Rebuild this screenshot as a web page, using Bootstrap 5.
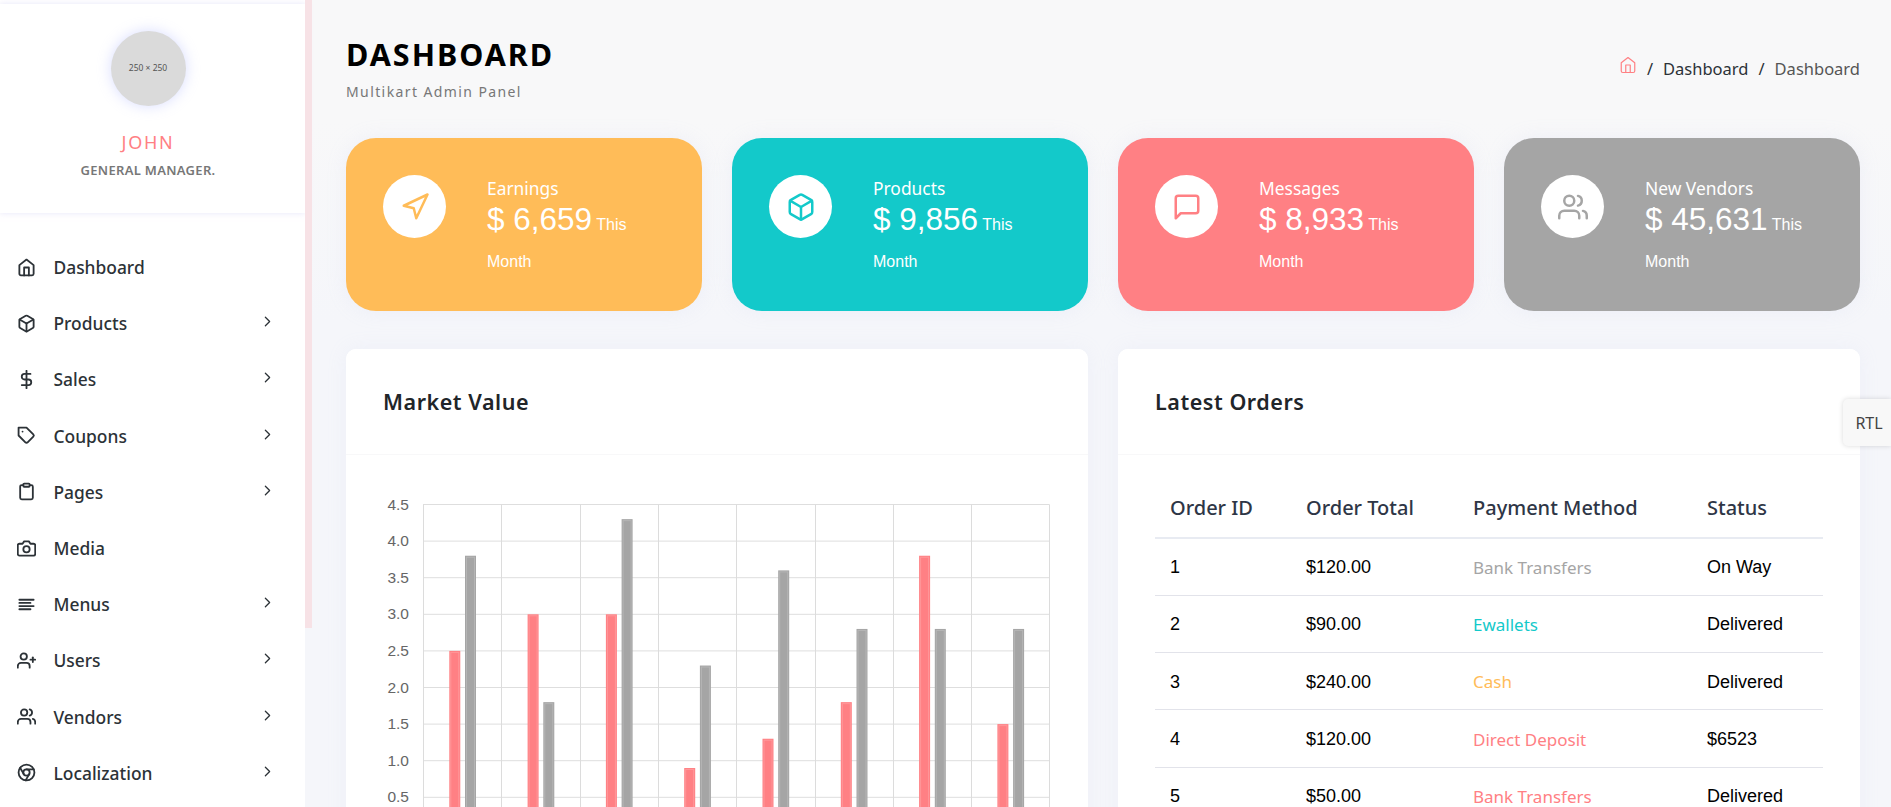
<!DOCTYPE html>
<html lang="en">
<head>
    <meta charset="UTF-8">
    <meta name="viewport" content="width=device-width, initial-scale=1">
    <title>Multikart Admin Panel</title>
    <link href="https://cdn.jsdelivr.net/npm/bootstrap@5.3.0/dist/css/bootstrap.min.css" rel="stylesheet">
    <style>
        body {
            font-family: "Noto Sans", "Open Sans", sans-serif;
            background: linear-gradient(to bottom, #f8f8f9 0, #f8f8f9 120px, #f5f6fa 320px);
            color: #2c3237;
        }

        .ico { fill: none; stroke: currentColor; stroke-width: 2; stroke-linecap: round; stroke-linejoin: round; }

        /* barra lateral */
        .side-panel { width: 305px; background: #fff; flex: none; }
        .side-top {
            height: 209px;
            margin-top: 4px;
            padding-right: 9px;
            background: #fff;
            box-shadow: 0 0 6px rgba(214, 212, 245, .6);
        }
        .side-track { width: 7px; flex: none; }
        .side-thumb { height: 628px; background: #f7e2e6; }
        .avatar-round {
            width: 75px;
            height: 75px;
            margin-top: 27px;
            background: #dadada;
            box-shadow: 0 0 14px rgba(170, 180, 255, .45);
            font-size: 8.5px;
            color: #555;
        }
        .user-name { margin-top: 24px; font-size: 18px; line-height: 24px; letter-spacing: 1.7px; color: #ff8084; }
        .user-role { margin-top: 7px; font-size: 13px; line-height: 18px; font-weight: 600; letter-spacing: .3px; color: #777; }
        .side-menu { padding-top: 26px; }
        .side-link {
            height: 56.2px;
            padding: 0 29px 0 17px;
            font-size: 17.4px;
            font-weight: 500;
            color: #2c3237;
        }
        .side-link:hover { color: #ff8084; }
        .side-link .ico-main { width: 19px; height: 19px; margin-right: 17.5px; flex: none; stroke-width: 2.3; }
        .side-link .ico-next { width: 17px; height: 17px; margin-left: auto; margin-top: -3px; flex: none; stroke-width: 1.8; }

        /* contenido */
        .main-area { padding: 0 31px 0 34px; min-width: 0; }
        .page-title { height: 138px; }
        .page-title h3 { margin: 36px 0 0; font-size: 30.5px; line-height: 36px; font-weight: 700; letter-spacing: 2px; color: #000; }
        .page-title p { margin: 10px 0 0; font-size: 14px; line-height: 20px; letter-spacing: 1.4px; color: #777; }
        .crumbs { margin: 58px 0 0; font-size: 16.5px; line-height: 22px; --bs-breadcrumb-item-padding-x: 10px; --bs-breadcrumb-divider-color: #2c3237; --bs-breadcrumb-item-active-color: #555; }
        .crumbs a { color: #2c3237; text-decoration: none; }
        .crumbs svg { width: 18px; height: 18px; margin-top: -11px; color: #ff8084; stroke-width: 1.6; }

        .row-wide { --bs-gutter-x: 30px; }
        .stat-box {
            height: 173px;
            padding: 37px;
            margin-bottom: 38px;
            border-radius: 30px;
            color: #fff;
            box-shadow: 0 0 20px rgba(190, 195, 235, .15);
        }
        .stat-orange { background: #ffbc58; }
        .stat-teal { background: #13c9ca; }
        .stat-red { background: #ff8084; }
        .stat-gray { background: #a5a5a5; }
        .stat-circle { width: 63px; height: 63px; margin-right: 41px; background: #fff; flex: none; }
        .stat-circle svg { width: 30px; height: 30px; }
        .stat-orange .stat-circle { color: #ffbc58; }
        .stat-teal .stat-circle { color: #13c9ca; }
        .stat-red .stat-circle { color: #ff8084; }
        .stat-gray .stat-circle { color: #a5a5a5; }
        .stat-label { margin-top: 1px; font-size: 17.4px; line-height: 25px; }
        .stat-value { font-family: "Liberation Sans", Arial, sans-serif; font-size: 31.5px; line-height: 37px; margin: 0; }
        .stat-value span { font-size: 16px; line-height: 1; }

        .panel-box { border: 0; border-radius: 10px; height: 520px; box-shadow: 0 0 20px rgba(190, 195, 235, .12); }
        .panel-box .card-header {
            flex: none;
            height: 106px;
            padding: 0 37px;
            display: flex;
            align-items: center;
            background: #fff;
            border-bottom: 1px solid #f8f8f9;
            border-radius: 10px 10px 0 0;
        }
        .panel-box h5 { margin: 0; font-size: 21.5px; font-weight: 600; letter-spacing: .55px; color: #212529; }
        .panel-box .card-body { padding: 37px; }

        .chart-svg { display: block; overflow: visible; }
        .chart-svg text { font-family: "Liberation Sans", Arial, sans-serif; font-size: 15.5px; fill: #666; }

        .orders-table { margin: -12px 0 0; font-family: "Liberation Sans", Arial, sans-serif; color: #000; --bs-table-color: #000; --bs-border-color: #e2e3ea; }
        .orders-table th {
            height: 58px;
            padding: 0 15px 2px;
            vertical-align: middle;
            font-family: "Noto Sans", sans-serif;
            font-size: 20px;
            font-weight: 500;
            color: #2e3646;
            border-bottom: 2px solid #e8ebf2;
        }
        .orders-table td { height: 57.3px; padding: 2px 15px 0; vertical-align: middle; font-size: 18px; }
        .pay-cell { font-family: "Noto Sans", sans-serif; font-size: 17px !important; }
        .pay-gray { color: #a5a5a5; }
        .pay-teal { color: #13c9ca; }
        .pay-orange { color: #ffbc58; }
        .pay-red { color: #ff8084; }

        .rtl-tab {
            position: absolute;
            top: 399px;
            right: 0;
            width: 48px;
            height: 47px;
            padding-left: 4px;
            background: #f8f8f8;
            border-radius: 5px 0 0 5px;
            box-shadow: 0 0 5px rgba(0, 0, 0, .15);
            font-size: 16px;
            color: #444;
        }
    </style>
</head>
<body class="vh-100 overflow-hidden d-flex position-relative">

<!-- iconos -->
<svg width="0" height="0" class="position-absolute">
    <symbol id="i-home" viewBox="0 0 24 24"><path d="M3 9l9-7 9 7v11a2 2 0 0 1-2 2H5a2 2 0 0 1-2-2z"/><polyline points="9 22 9 12 15 12 15 22"/></symbol>
    <symbol id="i-box" viewBox="0 0 24 24"><path d="M21 16V8a2 2 0 0 0-1-1.73l-7-4a2 2 0 0 0-2 0l-7 4A2 2 0 0 0 3 8v8a2 2 0 0 0 1 1.73l7 4a2 2 0 0 0 2 0l7-4A2 2 0 0 0 21 16z"/><polyline points="3.27 6.96 12 12.01 20.73 6.96"/><line x1="12" y1="22.08" x2="12" y2="12"/></symbol>
    <symbol id="i-dollar" viewBox="0 0 24 24"><line x1="12" y1="1" x2="12" y2="23"/><path d="M17 5H9.5a3.5 3.5 0 0 0 0 7h5a3.5 3.5 0 0 1 0 7H6"/></symbol>
    <symbol id="i-tag" viewBox="0 0 24 24"><path d="M20.59 13.41l-7.17 7.17a2 2 0 0 1-2.83 0L2 12V2h10l8.59 8.59a2 2 0 0 1 0 2.82z"/><line x1="7" y1="7" x2="7.01" y2="7"/></symbol>
    <symbol id="i-clip" viewBox="0 0 24 24"><path d="M16 4h2a2 2 0 0 1 2 2v14a2 2 0 0 1-2 2H6a2 2 0 0 1-2-2V6a2 2 0 0 1 2-2h2"/><rect x="8" y="2" width="8" height="4" rx="1"/></symbol>
    <symbol id="i-camera" viewBox="0 0 24 24"><path d="M23 19a2 2 0 0 1-2 2H3a2 2 0 0 1-2-2V8a2 2 0 0 1 2-2h4l2-3h6l2 3h4a2 2 0 0 1 2 2z"/><circle cx="12" cy="13" r="4"/></symbol>
    <symbol id="i-align" viewBox="0 0 24 24"><line x1="17" y1="10" x2="3" y2="10"/><line x1="21" y1="6" x2="3" y2="6"/><line x1="21" y1="14" x2="3" y2="14"/><line x1="17" y1="18" x2="3" y2="18"/></symbol>
    <symbol id="i-userplus" viewBox="0 0 24 24"><path d="M16 21v-2a4 4 0 0 0-4-4H5a4 4 0 0 0-4 4v2"/><circle cx="8.5" cy="7" r="4"/><line x1="20" y1="8" x2="20" y2="14"/><line x1="23" y1="11" x2="17" y2="11"/></symbol>
    <symbol id="i-users" viewBox="0 0 24 24"><path d="M17 21v-2a4 4 0 0 0-4-4H5a4 4 0 0 0-4 4v2"/><circle cx="9" cy="7" r="4"/><path d="M23 21v-2a4 4 0 0 0-3-3.87"/><path d="M16 3.13a4 4 0 0 1 0 7.75"/></symbol>
    <symbol id="i-chrome" viewBox="0 0 24 24"><circle cx="12" cy="12" r="10"/><circle cx="12" cy="12" r="4"/><line x1="21.17" y1="8" x2="12" y2="8"/><line x1="3.95" y1="6.06" x2="8.54" y2="14"/><line x1="10.88" y1="21.94" x2="15.46" y2="14"/></symbol>
    <symbol id="i-next" viewBox="0 0 24 24"><polyline points="9 18 15 12 9 6"/></symbol>
    <symbol id="i-nav" viewBox="0 0 24 24"><polygon points="3 11 22 2 13 21 11 13 3 11"/></symbol>
    <symbol id="i-msg" viewBox="0 0 24 24"><path d="M21 15a2 2 0 0 1-2 2H7l-4 4V5a2 2 0 0 1 2-2h14a2 2 0 0 1 2 2z"/></symbol>
</svg>

<aside class="side-panel">
    <div class="side-top text-center">
        <div class="avatar-round rounded-circle mx-auto d-inline-flex align-items-center justify-content-center">250 × 250</div>
        <div class="user-name">JOHN</div>
        <div class="user-role">GENERAL MANAGER.</div>
    </div>
    <nav class="side-menu nav flex-column">
        <a class="side-link nav-link d-flex align-items-center" href="#"><svg class="ico ico-main"><use href="#i-home"/></svg>Dashboard</a>
        <a class="side-link nav-link d-flex align-items-center" href="#"><svg class="ico ico-main"><use href="#i-box"/></svg>Products<svg class="ico ico-next"><use href="#i-next"/></svg></a>
        <a class="side-link nav-link d-flex align-items-center" href="#"><svg class="ico ico-main"><use href="#i-dollar"/></svg>Sales<svg class="ico ico-next"><use href="#i-next"/></svg></a>
        <a class="side-link nav-link d-flex align-items-center" href="#"><svg class="ico ico-main"><use href="#i-tag"/></svg>Coupons<svg class="ico ico-next"><use href="#i-next"/></svg></a>
        <a class="side-link nav-link d-flex align-items-center" href="#"><svg class="ico ico-main"><use href="#i-clip"/></svg>Pages<svg class="ico ico-next"><use href="#i-next"/></svg></a>
        <a class="side-link nav-link d-flex align-items-center" href="#"><svg class="ico ico-main"><use href="#i-camera"/></svg>Media</a>
        <a class="side-link nav-link d-flex align-items-center" href="#"><svg class="ico ico-main"><use href="#i-align"/></svg>Menus<svg class="ico ico-next"><use href="#i-next"/></svg></a>
        <a class="side-link nav-link d-flex align-items-center" href="#"><svg class="ico ico-main"><use href="#i-userplus"/></svg>Users<svg class="ico ico-next"><use href="#i-next"/></svg></a>
        <a class="side-link nav-link d-flex align-items-center" href="#"><svg class="ico ico-main"><use href="#i-users"/></svg>Vendors<svg class="ico ico-next"><use href="#i-next"/></svg></a>
        <a class="side-link nav-link d-flex align-items-center" href="#"><svg class="ico ico-main"><use href="#i-chrome"/></svg>Localization<svg class="ico ico-next"><use href="#i-next"/></svg></a>
    </nav>
</aside>
<div class="side-track"><div class="side-thumb"></div></div>

<main class="main-area flex-grow-1">
    <div class="page-title d-flex justify-content-between">
        <div>
            <h3>DASHBOARD</h3>
            <p>Multikart Admin Panel</p>
        </div>
        <ol class="crumbs breadcrumb">
            <li class="breadcrumb-item"><a href="#"><svg class="ico"><use href="#i-home"/></svg></a></li>
            <li class="breadcrumb-item"><a href="#">Dashboard</a></li>
            <li class="breadcrumb-item active">Dashboard</li>
        </ol>
    </div>

    <div class="row row-wide">
        <div class="col-3">
            <div class="stat-box stat-orange d-flex">
                <div class="stat-circle rounded-circle d-flex align-items-center justify-content-center"><svg class="ico"><use href="#i-nav"/></svg></div>
                <div>
                    <div class="stat-label">Earnings</div>
                    <h3 class="stat-value">$ 6,659<span> This Month</span></h3>
                </div>
            </div>
        </div>
        <div class="col-3">
            <div class="stat-box stat-teal d-flex">
                <div class="stat-circle rounded-circle d-flex align-items-center justify-content-center"><svg class="ico"><use href="#i-box"/></svg></div>
                <div>
                    <div class="stat-label">Products</div>
                    <h3 class="stat-value">$ 9,856<span> This Month</span></h3>
                </div>
            </div>
        </div>
        <div class="col-3">
            <div class="stat-box stat-red d-flex">
                <div class="stat-circle rounded-circle d-flex align-items-center justify-content-center"><svg class="ico"><use href="#i-msg"/></svg></div>
                <div>
                    <div class="stat-label">Messages</div>
                    <h3 class="stat-value">$ 8,933<span> This Month</span></h3>
                </div>
            </div>
        </div>
        <div class="col-3">
            <div class="stat-box stat-gray d-flex">
                <div class="stat-circle rounded-circle d-flex align-items-center justify-content-center"><svg class="ico"><use href="#i-users"/></svg></div>
                <div>
                    <div class="stat-label">New Vendors</div>
                    <h3 class="stat-value">$ 45,631<span> This Month</span></h3>
                </div>
            </div>
        </div>
    </div>

    <div class="row row-wide">
        <div class="col-6">
            <div class="card panel-box">
                <div class="card-header"><h5>Market Value</h5></div>
                <div class="card-body">
                    <svg id="marketChart" class="chart-svg" width="668" height="345"></svg>
                </div>
            </div>
        </div>
        <div class="col-6">
            <div class="card panel-box">
                <div class="card-header"><h5>Latest Orders</h5></div>
                <div class="card-body">
                    <table class="orders-table table">
                        <thead>
                            <tr><th style="width:136px">Order ID</th><th style="width:167px">Order Total</th><th style="width:234px">Payment Method</th><th>Status</th></tr>
                        </thead>
                        <tbody>
                            <tr><td>1</td><td>$120.00</td><td class="pay-cell pay-gray">Bank Transfers</td><td>On Way</td></tr>
                            <tr><td>2</td><td>$90.00</td><td class="pay-cell pay-teal">Ewallets</td><td>Delivered</td></tr>
                            <tr><td>3</td><td>$240.00</td><td class="pay-cell pay-orange">Cash</td><td>Delivered</td></tr>
                            <tr><td>4</td><td>$120.00</td><td class="pay-cell pay-red">Direct Deposit</td><td>$6523</td></tr>
                            <tr><td>5</td><td>$50.00</td><td class="pay-cell pay-red">Bank Transfers</td><td>Delivered</td></tr>
                        </tbody>
                    </table>
                </div>
            </div>
        </div>
    </div>
</main>

<div class="rtl-tab d-flex align-items-center justify-content-center">RTL</div>

<script src="https://cdn.jsdelivr.net/npm/bootstrap@5.3.0/dist/js/bootstrap.bundle.min.js"></script>
<script>
    // Grafica de barras Market Value
    var rojo = [2.5, 3, 3, 0.9, 1.3, 1.8, 3.8, 1.5];
    var gris = [3.8, 1.8, 4.3, 2.3, 3.6, 2.8, 2.8, 2.8];
    var x0 = 40, colW = 78.3, y0 = 12.5, unit = 73.2, base = y0 + 4.5 * unit;
    var html = "";

    for (var v = 0; v <= 9; v++) {
        var y = y0 + v * 0.5 * unit;
        html += '<line x1="' + x0 + '" x2="' + (x0 + 8 * colW) + '" y1="' + y + '" y2="' + y + '" stroke="#dedede" stroke-width="1"/>';
        if (v < 9) html += '<text x="26" y="' + (y + 5) + '" text-anchor="end">' + (4.5 - v * 0.5).toFixed(1) + '</text>';
    }
    for (var c = 0; c <= 8; c++) {
        var x = Math.round(x0 + c * colW) + 0.5;
        html += '<line x1="' + x + '" x2="' + x + '" y1="' + y0 + '" y2="' + base + '" stroke="#dcdcdc" stroke-width="1"/>';
    }
    function barra(x, val, color) {
        var y = base - val * unit;
        return '<rect x="' + x + '" y="' + y + '" width="11" height="' + (val * unit) + '" fill="' + color + '"/>' +
            '<rect x="' + (x + 1.5) + '" y="' + (y + 1.5) + '" width="8" height="' + (val * unit) + '" fill="none" stroke="#fff" stroke-opacity=".18"/>';
    }
    for (var i = 0; i < 8; i++) {
        html += barra(x0 + i * colW + 26.3, rojo[i], "#ff8084");
        html += barra(x0 + i * colW + 42, gris[i], "#a5a5a5");
    }
    document.getElementById("marketChart").innerHTML = html;
</script>
</body>
</html>
